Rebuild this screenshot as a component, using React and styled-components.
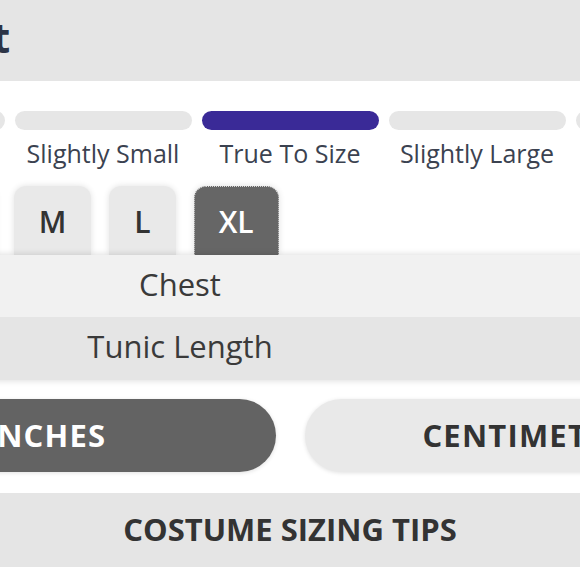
import React, { useState } from "react";
import styled, { createGlobalStyle } from "styled-components";

const Global = createGlobalStyle`
  html, body { margin: 0; padding: 0; background: #ffffff; overflow: hidden; }
  body { font-family: "Open Sans", "Noto Sans", sans-serif; }
  * { box-sizing: border-box; }
`;

const Viewport = styled.div`
  width: 580px;
  height: 580px;
  overflow: hidden;
  background: #fff;
`;

const Page = styled.div`
  width: 1000px;
  margin-left: -210px;
  display: flex;
  flex-direction: column;
`;

const Header = styled.header`
  height: 81px;
  background: #e5e5e5;
  display: flex;
  align-items: center;
  padding: 0 0 8px 11px;
`;

const Title = styled.h1`
  margin: 0;
  font-size: 42px;
  line-height: 1;
  font-weight: 700;
  color: #2c3446;
`;

const FitScale = styled.div`
  display: flex;
  justify-content: center;
  gap: 10px;
  padding-top: 30px;
`;

const FitStep = styled.div`
  width: 177px;
  display: flex;
  flex-direction: column;
  align-items: center;
`;

const FitBar = styled.div`
  width: 100%;
  height: 19px;
  border-radius: 10px;
  background: ${(p) => (p.$active ? "#3a2a97" : "#e6e6e6")};
`;

const FitLabel = styled.span`
  margin-top: 6px;
  font-size: 25px;
  line-height: 34px;
  color: #3b4250;
  white-space: nowrap;
`;

const Tabs = styled.div`
  display: flex;
  gap: 18px;
  padding-left: 36px;
  margin-top: 16px;
`;

const Tab = styled.button`
  height: 69px;
  padding: 0 24px;
  border: 1px ${(p) => (p.$active ? "dotted #d8d8d8" : "solid transparent")};
  border-bottom: none;
  border-radius: 12px 12px 0 0;
  background: ${(p) => (p.$active ? "#666666" : "#e9e9e9")};
  color: ${(p) => (p.$active ? "#ffffff" : "#333333")};
  font-family: "Open Sans", sans-serif;
  font-size: 30px;
  font-weight: 600;
  box-shadow: 0 0 6px rgba(0, 0, 0, 0.12);
  cursor: pointer;
`;

const Table = styled.div`
  position: relative;
  z-index: 1;
  display: grid;
  grid-template-columns: 780px 1fr;
  box-shadow: 0 0 7px rgba(0, 0, 0, 0.16);
`;

const Row = styled.div`
  display: contents;
`;

const Cell = styled.div`
  height: ${(p) => p.$h}px;
  background: ${(p) => p.$bg};
  display: flex;
  align-items: center;
  justify-content: center;
  padding-bottom: 5px;
  font-size: 31px;
  color: #3a3a3a;
`;

const Units = styled.div`
  width: 947px;
  margin: 19px auto 0;
  display: grid;
  grid-template-columns: 1fr 1fr;
  gap: 29px;
`;

const Pill = styled.button`
  height: 73px;
  border: none;
  border-radius: 37px;
  background: ${(p) => (p.$active ? "#636363" : "#e9e9e9")};
  color: ${(p) => (p.$active ? "#ffffff" : "#333333")};
  font-family: "Open Sans", sans-serif;
  font-size: 31px;
  font-weight: 700;
  letter-spacing: 1.2px;
  padding-bottom: 3px;
  box-shadow: 0 1px 4px rgba(0, 0, 0, 0.12);
  cursor: pointer;
`;

const TipsBar = styled.button`
  margin-top: 21px;
  height: 74px;
  width: 100%;
  border: none;
  background: #e5e5e5;
  color: #333333;
  font-family: "Open Sans", sans-serif;
  font-size: 31px;
  font-weight: 700;
  padding-bottom: 4px;
  cursor: pointer;
`;

const fits = ["Runs Small", "Slightly Small", "True To Size", "Slightly Large", "Runs Large"];
const sizes = ["XS", "S", "M", "L", "XL"];
const measures = {
  XS: ["30-32", "27"],
  S: ["34-36", "28"],
  M: ["38-40", "29"],
  L: ["42-44", "30"],
  XL: ["46-48", "31"],
};

export default function App() {
  const [size, setSize] = useState("XL");
  const [unit, setUnit] = useState("in");
  const vals = measures[size];
  return (
    <>
      <Global />
      <Viewport>
        <Page>
          <Header>
            <Title>Size Chart</Title>
          </Header>
          <FitScale>
            {fits.map((f) => (
              <FitStep key={f}>
                <FitBar $active={f === "True To Size"} />
                <FitLabel>{f}</FitLabel>
              </FitStep>
            ))}
          </FitScale>
          <Tabs>
            {sizes.map((s) => (
              <Tab key={s} $active={s === size} onClick={() => setSize(s)}>
                {s}
              </Tab>
            ))}
          </Tabs>
          <Table>
            <Row>
              <Cell $h={62} $bg="#f1f1f1">Chest</Cell>
              <Cell $h={62} $bg="#f1f1f1">{vals[0]}</Cell>
            </Row>
            <Row>
              <Cell $h={63} $bg="#e5e5e5">Tunic Length</Cell>
              <Cell $h={63} $bg="#e5e5e5">{vals[1]}</Cell>
            </Row>
          </Table>
          <Units>
            <Pill $active={unit === "in"} onClick={() => setUnit("in")}>INCHES</Pill>
            <Pill $active={unit === "cm"} onClick={() => setUnit("cm")}>CENTIMETERS</Pill>
          </Units>
          <TipsBar>COSTUME SIZING TIPS</TipsBar>
        </Page>
      </Viewport>
    </>
  );
}
